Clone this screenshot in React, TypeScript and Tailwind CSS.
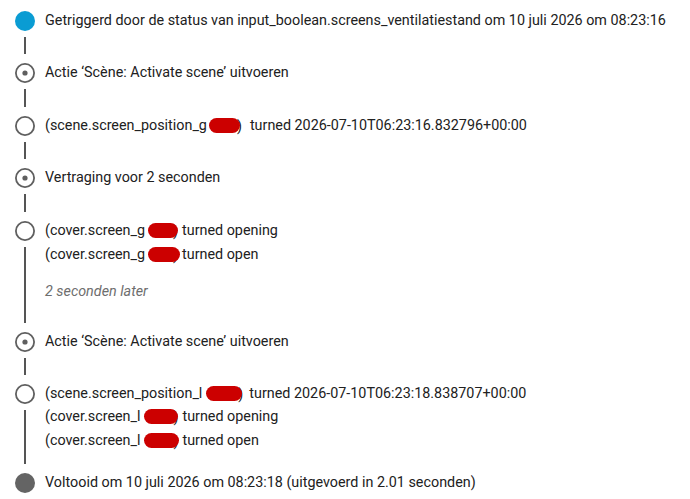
import React from "react";

type Kind = "trigger" | "step" | "entry" | "done";

function Ball({ kind }: { kind: Kind }) {
  if (kind === "trigger" || kind === "done") {
    const fill = kind === "trigger" ? "#0a9cd3" : "#646464";
    return (
      <svg width="24" height="24" viewBox="0 0 24 24" className="shrink-0">
        <circle cx="12" cy="12" r="10" fill={fill} />
      </svg>
    );
  }
  return (
    <svg width="24" height="24" viewBox="0 0 24 24" className="shrink-0">
      <circle cx="12" cy="12" r="9.1" fill="none" stroke="#5f5f5f" strokeWidth="1.8" />
      {kind === "step" && <circle cx="12" cy="12" r="2.6" fill="#5f5f5f" />}
    </svg>
  );
}

function Row({
  kind,
  last,
  pb,
  children,
}: {
  kind: Kind;
  last?: boolean;
  pb: string;
  children: React.ReactNode;
}) {
  return (
    <div className="flex">
      <div className="flex w-6 shrink-0 flex-col items-center">
        <Ball kind={kind} />
        {!last && <div className="mb-[7px] mt-[4px] w-[1.5px] flex-1 bg-[#555555]" />}
      </div>
      <div className={`ml-2 flex-1 ${pb}`}>{children}</div>
    </div>
  );
}

// Blotted-out part of an entity id; the closing bracket peeks out just past the blob.
function Blot({ w, blob, paren }: { w: string; blob: string; paren: string }) {
  return (
    <span className={`relative inline-block h-[14px] align-[-2px] ${w}`}>
      <span className={`absolute top-[-3px] ${paren}`}>)</span>
      <span className={`absolute top-[0px] h-[15px] rounded-full bg-[#cc0000] ${blob}`} />
    </span>
  );
}

function Line({ children }: { children: React.ReactNode }) {
  return <div className="whitespace-nowrap">{children}</div>;
}

export default function App() {
  return (
    <div
      className="min-h-[499px] w-[690px] bg-white pl-[13px] pt-[9px] text-[14.35px] leading-[23.5px] text-[#212121]"
      style={{ fontFamily: "Roboto, 'Noto Sans', sans-serif" }}
    >
      <Row kind="trigger" pb="pb-[28.5px]">
        <Line>
          Getriggerd door de status van input_boolean.screens_ventilatiestand om 10 juli 2026 om 08:23:16
        </Line>
      </Row>
      <Row kind="step" pb="pb-[29.5px]">
        <Line>Actie ‘Scène: Activate scene’ uitvoeren</Line>
      </Row>
      <Row kind="entry" pb="pb-[28.5px]">
        <Line>
          (scene.screen_position_g
          <Blot w="w-[43px]" blob="left-[2px] w-[31px]" paren="left-[30px]" />
          turned 2026-07-10T06:23:16.832796+00:00
        </Line>
      </Row>
      <Row kind="step" pb="pb-[29.5px]">
        <Line>Vertraging voor 2 seconden</Line>
      </Row>
      <Row kind="entry" pb="pb-[26px]">
        <Line>
          (cover.screen_g
          <Blot w="w-[37px]" blob="left-[3px] w-[30px]" paren="left-[28px]" />
          turned opening
        </Line>
        <Line>
          (cover.screen_g
          <Blot w="w-[37px]" blob="left-[3px] w-[32px]" paren="left-[28px]" />
          turned open
        </Line>
        <div className="mt-[14px] italic text-[#6e6e6e]">2 seconden later</div>
      </Row>
      <Row kind="step" pb="pb-[28.5px]">
        <Line>Actie ‘Scène: Activate scene’ uitvoeren</Line>
      </Row>
      <Row kind="entry" pb="pb-[18.5px]">
        <Line>
          (scene.screen_position_l
          <Blot w="w-[47px]" blob="left-[4px] w-[36px]" paren="left-[36px]" />
          turned 2026-07-10T06:23:18.838707+00:00
        </Line>
        <Line>
          (cover.screen_l
          <Blot w="w-[42px]" blob="left-[4px] w-[34px]" paren="left-[33px]" />
          turned opening
        </Line>
        <Line>
          (cover.screen_l
          <Blot w="w-[42px]" blob="left-[4px] w-[35px]" paren="left-[33px]" />
          turned open
        </Line>
      </Row>
      <Row kind="done" last pb="pb-[6px]">
        <Line>Voltooid om 10 juli 2026 om 08:23:18 (uitgevoerd in 2.01 seconden)</Line>
      </Row>
    </div>
  );
}
